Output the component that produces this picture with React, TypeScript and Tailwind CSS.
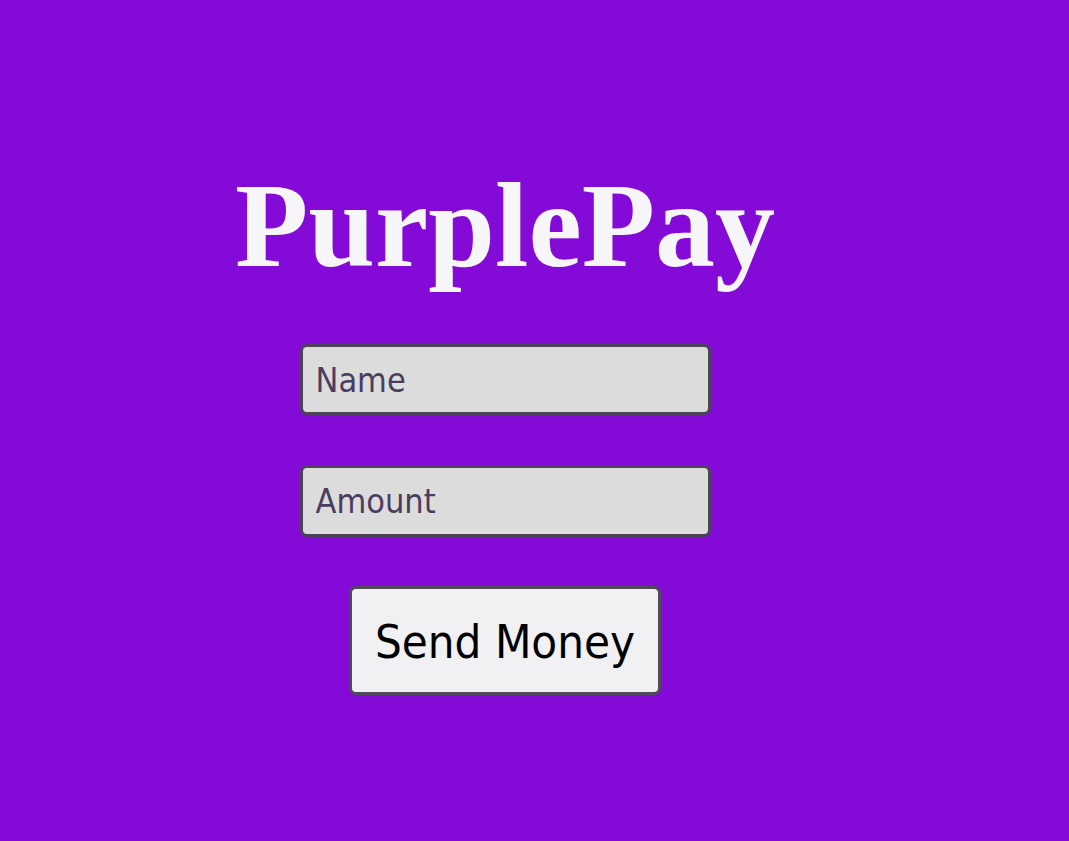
import React from "react";

export default function App() {
  const sans = "font-['Tahoma','DejaVu_Sans_Condensed','DejaVu_Sans',sans-serif]";
  return (
    <div className="min-h-[841px] w-full bg-[#840ad8]">
      <div className="flex w-[1010px] flex-col items-center pt-[166px]">
        <h1 className="font-['Liberation_Serif','Times_New_Roman',serif] text-[120px] font-bold leading-none text-[#f6f5f8]">
          PurplePay
        </h1>
        <input
          placeholder="Name"
          className={`mt-[58px] h-[71px] w-[411px] rounded-[7px] border-[3px] border-[#4c4358] bg-[#dcdcdc] pl-[13px] text-[34px] text-[#4b3d5e] placeholder:text-[#4b3d5e] outline-none ${sans}`}
        />
        <input
          placeholder="Amount"
          className={`mt-[50px] h-[72px] w-[411px] rounded-[7px] border-[3px] border-[#4c4358] bg-[#dcdcdc] pl-[13px] text-[34px] text-[#4b3d5e] placeholder:text-[#4b3d5e] outline-none ${sans}`}
        />
        <button
          className={`mt-[49px] h-[109px] w-[312px] rounded-[7px] border-[3px] border-[#4f4a58] bg-[#f1f0f3] pt-[4px] text-[47px] text-black ${sans}`}
        >
          Send Money
        </button>
      </div>
    </div>
  );
}
